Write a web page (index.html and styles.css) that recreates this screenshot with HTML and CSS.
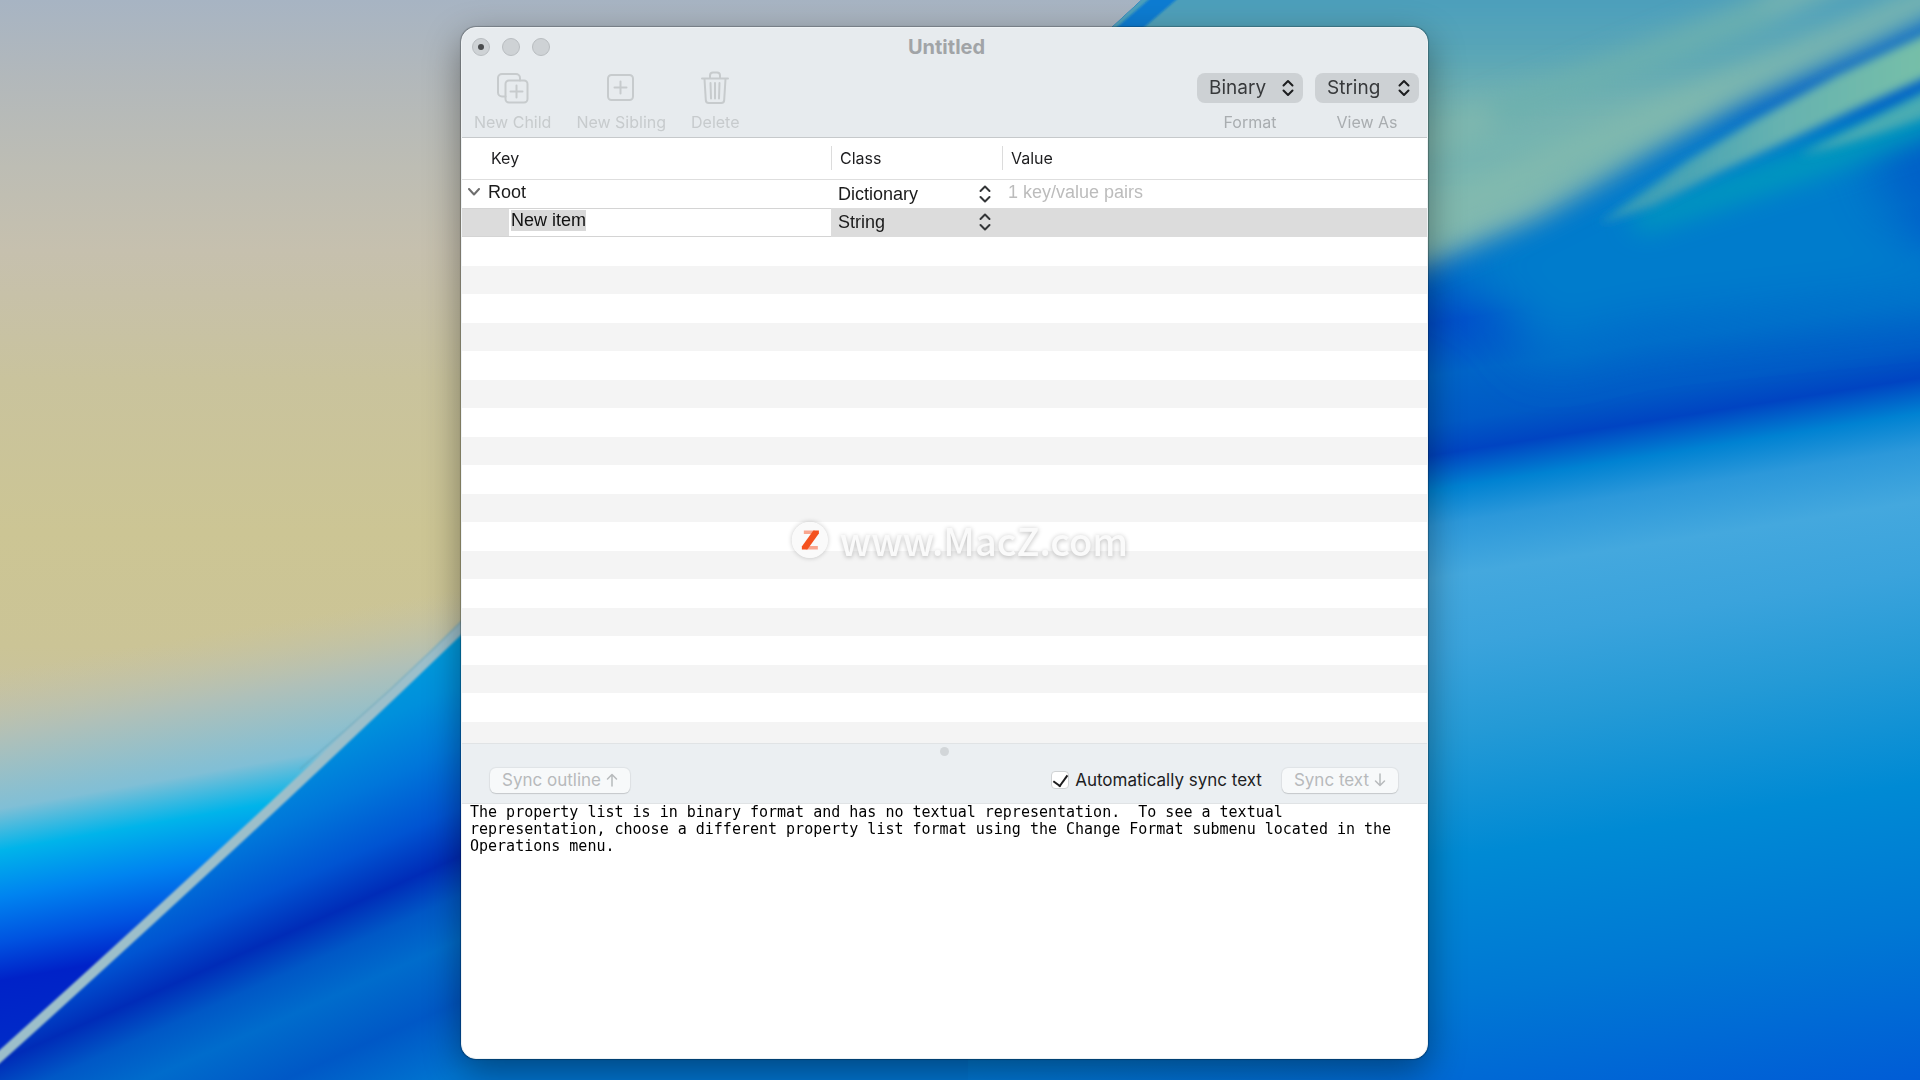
FILE: index.html
```html
<!DOCTYPE html>
<html lang="en">
<head>
<meta charset="utf-8">
<meta name="viewport" content="width=device-width, initial-scale=1">
<title>Untitled</title>
<link rel="stylesheet" href="styles.css">
</head>
<body>
<svg class="wallpaper" viewBox="0 0 1920 1080" preserveAspectRatio="none" aria-hidden="true">
  <defs>
    <linearGradient id="sand" gradientUnits="userSpaceOnUse" x1="0" y1="0" x2="0" y2="760">
      <stop offset="0" stop-color="#a7b4c3"/><stop offset=".1" stop-color="#b2b8bb"/>
      <stop offset=".22" stop-color="#bdbdb4"/><stop offset=".33" stop-color="#c6c0ae"/>
      <stop offset=".5" stop-color="#c9c39d"/><stop offset=".7" stop-color="#ccc594"/>
      <stop offset=".85" stop-color="#cbc496"/><stop offset="1" stop-color="#c4c1a8"/>
    </linearGradient>
    <linearGradient id="sea" gradientUnits="userSpaceOnUse" x1="0" y1="670" x2="0" y2="1090">
      <stop offset="0" stop-color="#c4c2aa" stop-opacity="0"/><stop offset=".16" stop-color="#b0c0b8"/>
      <stop offset=".33" stop-color="#80bfd6"/><stop offset=".43" stop-color="#00b4ea"/>
      <stop offset=".54" stop-color="#0084f0"/><stop offset=".65" stop-color="#0052e0"/>
      <stop offset=".74" stop-color="#0022c8"/><stop offset="1" stop-color="#0030c8"/>
    </linearGradient>
    <linearGradient id="deep" gradientUnits="userSpaceOnUse" x1="0" y1="632" x2="0" y2="1072">
      <stop offset="0" stop-color="#009cdc"/><stop offset=".12" stop-color="#0090dc"/>
      <stop offset=".26" stop-color="#0076da"/><stop offset=".4" stop-color="#0054d2"/>
      <stop offset=".51" stop-color="#002cb8"/><stop offset=".6" stop-color="#0058c6"/>
      <stop offset=".7" stop-color="#006ccc"/><stop offset=".84" stop-color="#0058c6"/>
      <stop offset="1" stop-color="#0074d0"/>
    </linearGradient>
    <linearGradient id="lake" gradientUnits="userSpaceOnUse" x1="0" y1="280" x2="0" y2="1160">
      <stop offset="0" stop-color="#0060c8"/><stop offset=".05" stop-color="#004cca"/>
      <stop offset=".11" stop-color="#0064c8"/><stop offset=".165" stop-color="#005ac6"/>
      <stop offset=".2" stop-color="#0044c2"/><stop offset=".24" stop-color="#0082d2"/>
      <stop offset=".28" stop-color="#2c98da"/><stop offset=".34" stop-color="#44a8de"/>
      <stop offset=".42" stop-color="#3aa3dc"/><stop offset=".52" stop-color="#249ad6"/>
      <stop offset=".66" stop-color="#008ad4"/><stop offset=".82" stop-color="#0078d4"/>
      <stop offset="1" stop-color="#005cd6"/>
    </linearGradient>
    <linearGradient id="meadow" gradientUnits="userSpaceOnUse" x1="0" y1="0" x2="0" y2="290">
      <stop offset="0" stop-color="#4c9fbc"/><stop offset=".2" stop-color="#5aa6b6"/>
      <stop offset=".36" stop-color="#74b2b0"/><stop offset=".52" stop-color="#74b4b0"/>
      <stop offset=".74" stop-color="#80b8b0"/><stop offset="1" stop-color="#70b0b0"/>
    </linearGradient>
    <linearGradient id="streak" x1="0" y1="0" x2="1" y2="0">
      <stop offset="0" stop-color="#2f98b8"/><stop offset=".5" stop-color="#66b2b0"/><stop offset="1" stop-color="#7ac2a6"/>
    </linearGradient>
    <filter id="haze" x="-40%" y="-60%" width="180%" height="220%"><feGaussianBlur stdDeviation="26"/></filter>
    <filter id="soft" x="-20%" y="-40%" width="140%" height="180%"><feGaussianBlur stdDeviation="13"/></filter>
    <filter id="fine" x="-20%" y="-40%" width="140%" height="180%"><feGaussianBlur stdDeviation="5"/></filter>
    <filter id="edge"><feGaussianBlur stdDeviation="1"/></filter>
    <clipPath id="below"><path d="M0 1056Q250 832 480 610L1150 -8H1920V1080H0Z"/></clipPath>
  </defs>
  <rect width="1920" height="1080" fill="url(#sand)"/>
  <g transform="skewY(-10)"><rect y="660" width="700" height="800" fill="url(#sea)"/></g>
  <g clip-path="url(#below)">
    <rect width="1920" height="1080" fill="#0070d0"/>
    <g transform="translate(460 0) skewY(-24)"><rect x="-460" y="200" width="1000" height="1500" fill="url(#deep)"/></g>
    <g transform="translate(1428 0) skewY(-9)"><rect x="-460" y="-200" width="1000" height="1600" fill="url(#lake)"/></g>
    <g filter="url(#haze)">
      <path d="M1440 250L1700 120L1880 130Q1850 230 1990 250V300Q1780 320 1640 335L1540 360Q1500 290 1440 280Z" fill="#007ccc"/>
    </g>
    <g filter="url(#soft)">
      <path d="M1630 215L1990 80V112L1850 165L1640 232Z" fill="#009cbc"/>
      <path d="M1000 -60H2000V-16L1820 66L1740 102L1660 148L1600 184L1540 218L1428 266L1200 330H1000Z" fill="url(#meadow)"/>
    </g>
    <g filter="url(#soft)" stroke-width="24" fill="none">
      <path d="M1380 160L1740 20L1960 -80" stroke="#80b8ae"/>
      <path d="M1380 246L1560 158L1860 30L1990 -30" stroke="#82baae"/>
      <path d="M1500 112L1760 16" stroke="#6cb0ae"/>
    </g>
    <g filter="url(#fine)">
      <path d="M1598 224L1687 161L1753 121L1837 75L1960 18V62L1853 110L1800 135L1720 172L1653 206Z" fill="url(#streak)"/>
      <path d="M1800 155Q1860 125 1960 74V104Q1870 140 1800 155Z" fill="#48acb2"/>
    </g>
  </g>
  <g filter="url(#edge)" fill="none">
    <path d="M1176 -12L1118 38" stroke="#0a7cd2" stroke-width="18"/>
    <path d="M-4 1060Q250 832 480 610" stroke="#9cbfca" stroke-width="10"/>
    <path d="M300 769Q390 694 480 603" stroke="#5c9fb4" stroke-width="1"/>
  </g>
</svg>

<div class="desktop">
  <main class="window">
    <header class="chrome">
      <div class="titlebar">
        <div class="lights">
          <button class="light edited" aria-label="Close"></button>
          <button class="light" aria-label="Minimize"></button>
          <button class="light" aria-label="Zoom"></button>
        </div>
        <h1 class="title">Untitled</h1>
      </div>
      <div class="toolbar">
        <button class="tool" disabled>
          <svg class="tool-icon" viewBox="0 0 32 30" aria-hidden="true"><path d="M8.500 23.500H5a4 4 0 0 1-4-4V5a4 4 0 0 1 4-4h14a4 4 0 0 1 4 4v2.500"/><rect x="8.500" y="7.500" width="22" height="22" rx="3.500"/><path d="M19.500 12.500v12M13.500 18.500h12"/></svg>
          <span>New Child</span>
        </button>
        <button class="tool" disabled>
          <svg class="tool-icon" viewBox="0 0 32 30" aria-hidden="true"><rect x="3" y="2" width="25" height="25" rx="3.500"/><path d="M15.500 8.500v12M9.500 14.500h12"/></svg>
          <span>New Sibling</span>
        </button>
        <button class="tool" disabled>
          <svg class="tool-icon" viewBox="0 0 32 30" aria-hidden="true"><path d="M3 5.500h26M11 5V2.500a3 3 0 0 1 3-3h4a3 3 0 0 1 3 3V5M5.500 6l1.300 21a3 3 0 0 0 3 3h12.400a3 3 0 0 0 3-3L26.500 6M11.500 10l.5 15.500M16 10v15.500M20.500 10l-.5 15.500"/></svg>
          <span>Delete</span>
        </button>
        <div class="choices">
          <div class="choice">
            <span class="popup popup-pill">
              <select id="format"><option>Binary</option><option>XML</option></select>
              <svg class="updown" viewBox="0 0 12 18" aria-hidden="true"><path d="M1.500 6.500L6 2l4.500 4.500M1.500 11.500L6 16l4.500-4.500"/></svg>
            </span>
            <label for="format">Format</label>
          </div>
          <div class="choice">
            <span class="popup popup-pill">
              <select id="view-as"><option>String</option><option>Data</option></select>
              <svg class="updown" viewBox="0 0 12 18" aria-hidden="true"><path d="M1.500 6.500L6 2l4.500 4.500M1.500 11.500L6 16l4.500-4.500"/></svg>
            </span>
            <label for="view-as">View As</label>
          </div>
        </div>
      </div>
    </header>

    <section class="outline">
      <table class="plist">
        <colgroup><col class="col-key"><col class="col-class"><col></colgroup>
        <thead>
          <tr><th class="head-key"><span>Key</span></th><th><span>Class</span></th><th><span>Value</span></th></tr>
        </thead>
        <tbody>
          <tr class="row">
            <td><div class="key"><button class="toggle" aria-label="Collapse Root"><svg viewBox="0 0 12 8" aria-hidden="true"><path d="M1 1l5 5.500L11 1"/></svg></button>Root</div></td>
            <td><span class="popup popup-cell"><select aria-label="Class of Root"><option>Dictionary</option><option>Array</option></select><svg class="updown" viewBox="0 0 12 18" aria-hidden="true"><path d="M1.500 6L6 1.500 10.500 6M1.500 12L6 16.500 10.500 12"/></svg></span></td>
            <td><div class="count">1 key/value pairs</div></td>
          </tr>
          <tr class="row selected">
            <td><div class="key-edit"><input class="key-input" type="text" value="New item" aria-label="Key"></div></td>
            <td><span class="popup popup-cell"><select aria-label="Class of New item"><option>String</option><option>Number</option></select><svg class="updown" viewBox="0 0 12 18" aria-hidden="true"><path d="M1.500 6L6 1.500 10.500 6M1.500 12L6 16.500 10.500 12"/></svg></span></td>
            <td></td>
          </tr>
        </tbody>
      </table>
      <div class="stripes"></div>
    </section>

    <div class="syncbar">
      <span class="grip"></span>
      <button class="push" disabled>Sync outline <svg viewBox="0 0 12 14" aria-hidden="true"><path d="M6 13V1.500M1.500 6L6 1.500 10.500 6"/></svg></button>
      <label class="auto"><input type="checkbox" checked>Automatically sync text</label>
      <button class="push" disabled>Sync text <svg viewBox="0 0 12 14" aria-hidden="true"><path d="M6 1v11.500M1.500 8L6 12.500 10.500 8"/></svg></button>
    </div>

    <textarea class="source" aria-label="Property list text" readonly spellcheck="false">The property list is in binary format and has no textual representation.  To see a textual representation, choose a different property list format using the Change Format submenu located in the Operations menu.</textarea>
  </main>
</div>

<div class="watermark">
  <svg class="mark" viewBox="0 0 36 36" aria-hidden="true"><circle cx="18" cy="18" r="18" fill="#fafafa"/><path d="M12 8.500h11v3.500H12z" fill="#f9a68f"/><path d="M14 24h12v3.500H14z" fill="#f9a68f"/><path d="M21.500 8.500H27v3L15.500 27.500H10v-3z" fill="#f4511e"/></svg>
  <span>www.MacZ.com</span>
</div>
<script src="script.js"></script>
</body>
</html>
```
FILE: script.js
```js
// The key of a newly added item is opened for renaming with its text selected.
const keyInput = document.querySelector(".key-input");
keyInput.focus();
keyInput.select();
```
FILE: styles.css
```css
* { box-sizing: border-box; }

body {
  margin: 0;
  background: #0070d0;
  color: #1d1d1f;
  font: 16px/20px Inter, "Liberation Sans", sans-serif;
}

button, select, input, textarea {
  margin: 0;
  padding: 0;
  border: 0;
  background: none;
  color: inherit;
  font: inherit;
  outline: none;
}

svg { fill: none; stroke-linecap: round; stroke-linejoin: round; }

.wallpaper {
  position: fixed;
  inset: 0;
  z-index: -1;
  width: 100%;
  height: 100%;
}

.desktop {
  display: grid;
  grid-template-columns: 461fr 967fr 492fr;
  min-height: 100vh;
  padding: 27px 0 21px;
}

.window {
  grid-column: 2;
  display: flex;
  flex-direction: column;
  overflow: hidden;
  border: 1px solid #eef2f4;
  border-radius: 15px;
  background: #fff;
  box-shadow: 0 0 1px 1px rgba(0, 0, 0, .25), 0 12px 36px rgba(0, 0, 0, .4);
}

/* Title bar and toolbar */
.chrome {
  padding: 0 8px 5px 12px;
  border-bottom: 1px solid #c6c9cb;
  background: #e7ebee;
}

.titlebar {
  display: grid;
  grid-template-columns: 1fr auto 1fr;
  align-items: center;
  height: 38px;
}

.lights {
  display: flex;
  gap: 12px;
  margin-left: -2px;
}

.light {
  display: grid;
  place-items: center;
  width: 18px;
  height: 18px;
  border: 1px solid #b9bdc0;
  border-radius: 50%;
  background: #ced2d5;
}

.edited::after {
  content: "";
  width: 6px;
  height: 6px;
  border-radius: 50%;
  background: #4a4c4e;
}

.title {
  margin: 0;
  color: #a1a4a7;
  font-size: 20px;
  font-weight: 700;
}

.toolbar {
  display: flex;
  gap: 25px;
  padding-top: 7px;
  color: #c7cbcd;
}

.tool, .choice {
  display: flex;
  flex-direction: column;
  align-items: center;
  gap: 9px;
}

.tool-icon {
  width: 32px;
  height: 30px;
  overflow: visible;
  stroke: #c7cbcd;
  stroke-width: 2;
}

.choices {
  display: flex;
  gap: 12px;
  margin-left: auto;
  color: #a9adb0;
}

/* Pop-up menus: the select and its arrows share one grid cell */
.popup { display: grid; align-items: center; }

.popup > * { grid-area: 1 / 1; }

.popup select { width: 100%; height: 100%; appearance: none; }

.updown {
  justify-self: end;
  width: 12px;
  height: 18px;
  pointer-events: none;
  stroke: #333537;
  stroke-width: 2;
}

.popup-pill {
  min-width: 104px;
  height: 30px;
  border-radius: 8px;
  background: #cdd1d4;
  color: #37393b;
  font-size: 19px;
}

.popup-pill select { padding: 0 36px 0 12px; }

.popup-pill .updown { margin-right: 9px; stroke: #1c1d1f; }

/* Outline */
.outline {
  display: flex;
  flex: 606 0 0;
  flex-direction: column;
  overflow: hidden;
}

.plist {
  width: 100%;
  border-collapse: collapse;
  table-layout: fixed;
}

.col-key { width: 369px; }
.col-class { width: 171px; }

.plist th {
  height: 41px;
  padding: 0;
  border-bottom: 1px solid #dedede;
  font-weight: 400;
  text-align: left;
}

.plist th span {
  display: block;
  padding-left: 8px;
  border-left: 1px solid #dcdcdc;
  line-height: 24px;
}

.plist .head-key span { padding-left: 28px; border-color: transparent; }

.plist td { padding: 0; }

.row {
  height: 28px;
  color: #1b1b1b;
  font: 18px/24px "Liberation Sans", Arial, sans-serif;
}

.selected { height: 29px; background: #dcdcdc; }

.key {
  display: flex;
  align-items: center;
  gap: 8px;
  height: 28px;
  padding: 0 0 3px 6px;
}

.toggle { display: flex; }

.toggle svg {
  width: 12px;
  height: 8px;
  stroke: #6e6e6e;
  stroke-width: 2;
}

.count { height: 28px; padding-left: 6px; color: #bcbcbc; }

.popup-cell { height: 28px; padding: 0 11px 0 7px; }

.key-edit {
  height: 29px;
  padding-left: 47px;
  border: solid #d4d4d4;
  border-width: 1px 0;
}

.key-input {
  display: block;
  width: 100%;
  height: 27px;
  padding: 0 0 3px 2px;
  background: #fff;
  color: #111;
}

.key-input::selection { background: #d9d9d9; color: #111; }

.stripes {
  flex: 1;
  background: repeating-linear-gradient(#fff 0 29px, #f4f4f4 29px 57px);
}

/* Divider bar with the sync controls */
.syncbar {
  position: relative;
  display: flex;
  align-items: center;
  gap: 20px;
  min-height: 61px;
  padding: 13px 29px 0 28px;
  border: solid #e0e3e5;
  border-width: 1px 0;
  background: #ebeff2;
  font-size: 17px;
}

.grip {
  position: absolute;
  top: 3px;
  left: 50%;
  width: 9px;
  height: 9px;
  margin-left: -5px;
  border-radius: 50%;
  background: #d2d6d9;
}

.push {
  display: flex;
  align-items: center;
  gap: 5px;
  height: 25px;
  padding: 0 12px;
  border-radius: 6px;
  background: #f7f9fa;
  box-shadow: 0 0 1px 1px rgba(0, 0, 0, .05), 0 1px 1px rgba(0, 0, 0, .12);
  color: #b7babc;
}

.push svg {
  width: 12px;
  height: 14px;
  stroke: #b7babc;
  stroke-width: 1.5;
}

.auto {
  display: flex;
  align-items: center;
  gap: 6px;
  margin-left: auto;
}

.auto input {
  display: grid;
  place-items: center;
  width: 18px;
  height: 18px;
  appearance: none;
  border: 1px solid #cfd2d4;
  border-radius: 4px;
  background: #fff;
}

.auto input:checked::after {
  content: "";
  width: 7px;
  height: 12px;
  margin-bottom: 3px;
  border: solid #1c1c1e;
  border-width: 0 2px 2px 0;
  transform: rotate(36deg);
}

.source {
  display: block;
  flex: 254 0 0;
  padding: 0 8px;
  resize: none;
  color: #000;
  font: 15px/17px "DejaVu Sans Mono", monospace;
}

/* Site mark laid over the whole desktop */
.watermark {
  position: fixed;
  top: 50%;
  left: 50%;
  display: flex;
  align-items: center;
  gap: 12px;
  transform: translate(-50%, -50%);
  pointer-events: none;
  color: #fafafa;
  font: 500 38px/40px "Noto Sans CJK SC", sans-serif;
  text-shadow: 0 1px 5px rgba(0, 0, 0, .28);
}

.mark {
  width: 36px;
  height: 36px;
  border-radius: 50%;
  box-shadow: 0 0 5px rgba(0, 0, 0, .22);
}
```
